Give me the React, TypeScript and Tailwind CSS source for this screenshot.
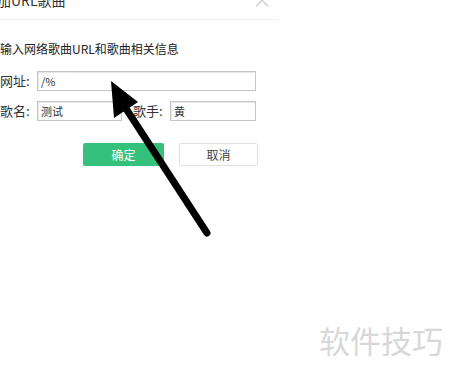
import React from "react";

export default function App() {
  const font = "font-['Noto_Sans_CJK_SC','Microsoft_YaHei',sans-serif]";
  return (
    <div className={`relative w-[450px] h-[376px] overflow-hidden bg-white ${font}`}>
      <div className="w-[298px] ml-[-20px] mt-[-14px]">
        <div className="flex items-center justify-between h-[34px] border-b border-[#eeeeee] pl-[3px] pr-[6px]">
          <span className="text-[14px] text-[#333] leading-none mt-[-6px]">添加URL歌曲</span>
          <span className="text-[20px] text-[#c4c4c4] leading-none font-light mt-[-6px]">×</span>
        </div>
        <div className="pl-[20px]">
          <div className="mt-[19px] h-[20px] flex items-center text-[12px] text-[#222]">
            输入网络歌曲URL和歌曲相关信息
          </div>
          <div className="mt-[12px] flex items-center h-[20px]">
            <span className="w-[37px] text-[13px] text-[#333]">网址:</span>
            <div className="w-[219px] h-[20px] border border-[#c6c6c6] shadow-[inset_1px_1px_1px_rgba(0,0,0,0.1)] flex items-center px-[3px] text-[11px] text-[#333]">
              /%
            </div>
          </div>
          <div className="mt-[10px] flex items-center h-[20px]">
            <span className="w-[37px] text-[13px] text-[#333]">歌名:</span>
            <div className="w-[85px] h-[20px] border border-[#c6c6c6] shadow-[inset_1px_1px_1px_rgba(0,0,0,0.1)] flex items-center px-[3px] text-[11px] text-[#333]">
              测试
            </div>
            <span className="ml-[11px] w-[37px] text-[13px] text-[#333]">歌手:</span>
            <div className="w-[86px] h-[20px] border border-[#c6c6c6] shadow-[inset_1px_1px_1px_rgba(0,0,0,0.1)] flex items-center px-[3px] text-[11px] text-[#333]">
              黄
            </div>
          </div>
          <div className="mt-[22px] flex items-center">
            <div className="ml-[83px] w-[81px] h-[23px] bg-[#35c17c] rounded-[2px] flex items-center justify-center text-[12px] text-white">
              确定
            </div>
            <div className="ml-[15px] w-[79px] h-[23px] border border-[#e2e2e2] bg-white rounded-[2px] flex items-center justify-center text-[12px] text-[#444]">
              取消
            </div>
          </div>
        </div>
      </div>

      <div className="absolute left-[319px] top-[324px] text-[31px] leading-none text-[#d8d8d8] tracking-[0px]">
        软件技巧
      </div>

      <svg className="absolute left-0 top-0" width="450" height="376" viewBox="0 0 450 376">
        <line x1="207" y1="233" x2="123" y2="104" stroke="#000" strokeWidth="7" strokeLinecap="round" />
        <polygon points="111,81 114,118 138,102" fill="#000" />
      </svg>
    </div>
  );
}
